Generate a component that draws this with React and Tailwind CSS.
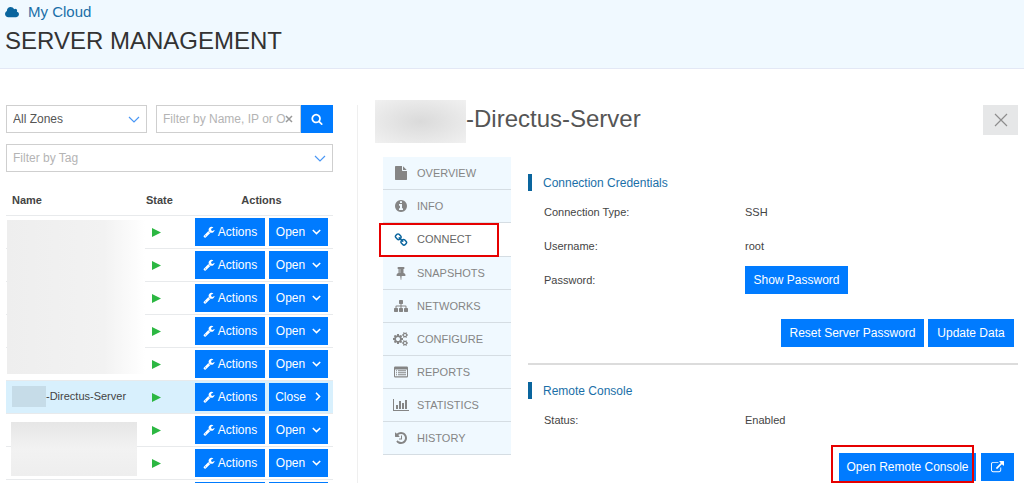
import React from "react";

const PATHS = {
  cloud: [1920, "M1920 1152q0 159-112.5 271.5t-271.5 112.5h-1088q-185 0-316.5-131.5t-131.5-316.5q0-132 71-241.5t187-163.5q-2-28-2-43 0-212 150-362t362-150q158 0 286.5 88t187.5 230q70-62 166-62 106 0 181 75t75 181q0 75-41 138 129 30 213 134.5t84 239.5z"],
  wrench: [1792, "M448 1472q0-26-19-45t-45-19-45 19-19 45 19 45 45 19 45-19 19-45zm644-420l-682 682q-37 37-90 37-52 0-91-37l-106-108q-38-36-38-90 0-53 38-91l681-681q39 98 114.5 173.5t173.5 114.5zm634-435q0 39-23 106-47 134-164.5 217.5t-258.5 83.5q-185 0-316.5-131.5t-131.5-316.5 131.5-316.5 316.5-131.5q58 0 121.5 16.5t107.5 46.5q16 11 16 28t-16 28l-293 169v224l193 107q5-3 79-48.5t135.5-81 70.5-35.5q15 0 23.5 10t8.5 25z"],
  search: [1792, "M1216 832q0-185-131.5-316.5t-316.5-131.5-316.5 131.5-131.5 316.5 131.5 316.5 316.5 131.5 316.5-131.5 131.5-316.5zm512 832q0 52-38 90t-90 38q-54 0-90-38l-343-342q-179 124-399 124-143 0-273.5-55.5t-225-150-150-225-55.5-273.5 55.5-273.5 150-225 225-150 273.5-55.5 273.5 55.5 225 150 150 225 55.5 273.5q0 220-124 399l343 343q37 37 37 90z"],
  file: [1792, "M1152 512v-472q22 14 36 28l408 408q14 14 28 36h-472zm-128 32q0 40 28 68t68 28h544v1056q0 40-28 68t-68 28h-1344q-40 0-68-28t-28-68v-1600q0-40 28-68t68-28h800v544z"],
  info: [1792, "M1152 1376v-160q0-14-9-23t-23-9h-96v-512q0-14-9-23t-23-9h-320q-14 0-23 9t-9 23v160q0 14 9 23t23 9h96v320h-96q-14 0-23 9t-9 23v160q0 14 9 23t23 9h448q14 0 23-9t9-23zm-128-896v-160q0-14-9-23t-23-9h-192q-14 0-23 9t-9 23v160q0 14 9 23t23 9h192q14 0 23-9t9-23zm640 416q0 209-103 385.5t-279.5 279.5-385.5 103-385.5-103-279.5-279.5-103-385.5 103-385.5 279.5-279.5 385.5-103 385.5 103 279.5 279.5 103 385.5z"],
  link: [1792, "M1520 1216q0-40-28-68l-208-208q-28-28-68-28-42 0-72 32 3 3 19 18.5t21.5 21.5 15 19 13 25.5 3.5 27.5q0 40-28 68t-68 28q-15 0-27.5-3.5t-25.5-13-19-15-21.5-21.5-18.5-19q-33 31-33 73 0 40 28 68l206 207q27 27 68 27 40 0 68-26l147-146q28-28 28-67zm-703-705q0-40-28-68l-206-207q-28-28-68-28-39 0-68 27l-147 146q-28 28-28 67 0 40 28 68l208 208q27 27 68 27 42 0 72-31-3-3-19-18.5t-21.5-21.5-15-19-13-25.5-3.5-27.5q0-40 28-68t68-28q15 0 27.5 3.5t25.5 13 19 15 21.5 21.5 18.5 19q33-31 33-73zm895 705q0 120-85 203l-147 146q-83 83-203 83-121 0-204-85l-206-207q-83-83-83-203 0-123 88-209l-88-88q-86 88-208 88-120 0-204-84l-208-208q-84-84-84-204t85-203l147-146q83-83 203-83 121 0 204 85l206 207q83 83 83 203 0 123-88 209l88 88q86-88 208-88 120 0 204 84l208 208q84 84 84 204z"],
  pin: [1792, "M800 864v-448q0-14-9-23t-23-9-23 9-9 23v448q0 14 9 23t23 9 23-9 9-23zm672 352q0 26-19 45t-45 19h-429l-51 483q-2 12-10.5 20.5t-20.5 8.5h-1q-27 0-32-27l-76-485h-404q-26 0-45-19t-19-45q0-123 78.5-221.5t177.5-98.5v-512q-52 0-90-38t-38-90 38-90 90-38h640q52 0 90 38t38 90-38 90-90 38v512q99 0 177.5 98.5t78.5 221.5z"],
  sitemap: [1792, "M1792 1248v320q0 40-28 68t-68 28h-320q-40 0-68-28t-28-68v-320q0-40 28-68t68-28h96v-192h-512v192h96q40 0 68 28t28 68v320q0 40-28 68t-68 28h-320q-40 0-68-28t-28-68v-320q0-40 28-68t68-28h96v-192h-512v192h96q40 0 68 28t28 68v320q0 40-28 68t-68 28h-320q-40 0-68-28t-28-68v-320q0-40 28-68t68-28h96v-192q0-52 38-90t90-38h512v-192h-96q-40 0-68-28t-28-68v-320q0-40 28-68t68-28h320q40 0 68 28t28 68v320q0 40-28 68t-68 28h-96v192h512q52 0 90 38t38 90v192h96q40 0 68 28t28 68z"],
  cogs: [1920, "M896 896q0-106-75-181t-181-75-181 75-75 181 75 181 181 75 181-75 75-181zm768 512q0-52-38-90t-90-38-90 38-38 90q0 53 37.5 90.5t90.5 37.5 90.5-37.5 37.5-90.5zm0-1024q0-52-38-90t-90-38-90 38-38 90q0 53 37.5 90.5t90.5 37.5 90.5-37.5 37.5-90.5zm-384 421v185q0 10-7 19.5t-16 10.5l-155 24q-11 35-32 76 34 48 90 115 7 11 7 20 0 12-7 19-23 30-82.5 89.5t-78.5 59.5q-11 0-21-7l-115-90q-37 19-77 31-11 108-23 155-7 24-30 24h-186q-11 0-20-7.5t-10-17.5l-23-153q-34-10-75-31l-118 89q-7 7-20 7-11 0-21-8-144-133-144-160 0-9 7-19 10-14 41-53t47-61q-23-44-35-82l-152-24q-10-1-17-9.5t-7-19.5v-185q0-10 7-19.5t16-10.5l155-24q11-35 32-76-34-48-90-115-7-11-7-20 0-12 7-20 22-30 82-89t79-59q11 0 21 7l115 90q34-18 77-32 11-108 23-154 7-24 30-24h186q11 0 20 7.5t10 17.5l23 153q34 10 75 31l118-89q8-7 20-7 11 0 21 8 144 133 144 160 0 8-7 19-12 16-42 54t-45 60q23 48 34 82l152 23q10 2 17 10.5t7 19.5zm640 533v140q0 16-149 31-12 27-30 52 51 113 51 138 0 4-4 7-122 71-124 71-8 0-46-47t-52-68q-20 2-30 2t-30-2q-14 21-52 68t-46 47q-2 0-124-71-4-3-4-7 0-25 51-138-18-25-30-52-149-15-149-31v-140q0-16 149-31 13-29 30-52-51-113-51-138 0-4 4-7 4-2 35-20t59-34 30-16q8 0 46 46.5t52 67.5q20-2 30-2t30 2q51-71 92-112l6-2q4 0 124 70 4 3 4 7 0 25-51 138 17 23 30 52 149 15 149 31zm0-1024v140q0 16-149 31-12 27-30 52 51 113 51 138 0 4-4 7-122 71-124 71-8 0-46-47t-52-68q-20 2-30 2t-30-2q-14 21-52 68t-46 47q-2 0-124-71-4-3-4-7 0-25 51-138-18-25-30-52-149-15-149-31v-140q0-16 149-31 13-29 30-52-51-113-51-138 0-4 4-7 4-2 35-20t59-34 30-16q8 0 46 46.5t52 67.5q20-2 30-2t30 2q51-71 92-112l6-2q4 0 124 70 4 3 4 7 0 25-51 138 17 23 30 52 149 15 149 31z"],
  list: [1792, "M160 192h1472a160 160 0 0 1 160 160v1088a160 160 0 0 1-160 160h-1472a160 160 0 0 1-160-160v-1088a160 160 0 0 1 160-160zM128 576v832a32 32 0 0 0 32 32h1472a32 32 0 0 0 32-32v-832zM256 672h128v128h-128zM512 672h1024v128h-1024zM256 928h128v128h-128zM512 928h1024v128h-1024zM256 1184h128v128h-128zM512 1184h1024v128h-1024z"],
  chart: [2048, "M640 896v512h-256v-512h256zm384-512v1024h-256v-1024h256zm1024 1152v128h-2048v-1536h128v1408h1920zm-640-896v768h-256v-768h256zm384-384v1152h-256v-1152h256z"],
  history: [1792, "M1664 896q0 156-61 298t-164 245-245 164-298 61q-172 0-327-72.5t-264-204.5q-7-10-6.5-22.5t8.5-20.5l137-138q10-9 25-9 16 2 23 12 73 95 179 147t225 52q104 0 198.5-40.5t163.5-109.5 109.5-163.5 40.5-198.5-40.5-198.5-109.5-163.5-163.5-109.5-198.5-40.5q-98 0-188 35.5t-160 101.5l137 138q31 30 14 69-17 40-59 40h-448q-26 0-45-19t-19-45v-448q0-42 40-59 39-17 69 14l130 129q107-101 244.5-156.5t284.5-55.5q156 0 298 61t245 164 164 245 61 298zm-640-288v448q0 14-9 23t-23 9h-320q-14 0-23-9t-9-23v-64q0-14 9-23t23-9h224v-352q0-14 9-23t23-9h64q14 0 23 9t9 23z"],
  external: [1792, "M1408 928v320q0 119-84.5 203.5t-203.5 84.5h-832q-119 0-203.5-84.5t-84.5-203.5v-832q0-119 84.5-203.5t203.5-84.5h704q14 0 23 9t9 23v64q0 14-9 23t-23 9h-704q-66 0-113 47t-47 113v832q0 66 47 113t113 47h832q66 0 113-47t47-113v-320q0-14 9-23t23-9h64q14 0 23 9t9 23zm384-864v512q0 26-19 45t-45 19-45-19l-176-176-652 652q-10 10-23 10t-23-10l-114-114q-10-10-10-23t10-23l652-652-176-176q-19-19-19-45t19-45 45-19h512q26 0 45 19t19 45z"],
};

function Icon({ name, className }) {
  const [width, d] = PATHS[name];
  return (
    <svg viewBox={`0 0 ${width} 1792`} className={className} fill="currentColor" fillRule={name === "list" ? "evenodd" : "nonzero"} aria-hidden="true">
      <path d={d} />
    </svg>
  );
}

function Chevron({ className, d = "M1 1l5 5 5-5", box = "0 0 12 7", weight = 1.2 }) {
  return (
    <svg viewBox={box} className={className} fill="none" stroke="currentColor" strokeWidth={weight} aria-hidden="true">
      <path d={d} />
    </svg>
  );
}

function Select({ label, className, children }) {
  return (
    <div className={"relative " + className}>
      <select
        aria-label={label}
        className="h-7 w-full appearance-none border border-[#cfcfcf] bg-white px-[6px] text-xs text-inherit outline-none"
      >
        {children}
      </select>
      <Chevron className="pointer-events-none absolute right-[7px] top-[11px] h-[7px] w-3 text-[#4a97f5]" />
    </div>
  );
}

function Button({ className = "", children, ...rest }) {
  return (
    <button
      type="button"
      className={"flex h-7 shrink-0 items-center justify-center whitespace-nowrap bg-[#007bff] text-xs text-white " + className}
      {...rest}
    >
      {children}
    </button>
  );
}

const SERVERS = [
  { id: 1 },
  { id: 2 },
  { id: 3 },
  { id: 4 },
  { id: 5 },
  { id: 6, name: "-Directus-Server", open: true },
  { id: 7 },
  { id: 8 },
  { id: 9 },
];

function ServerRow({ server }) {
  return (
    <tr className={"h-[33px] border-b border-[#e8eaec] " + (server.open ? "bg-[#d8f0fd]" : "")}>
      <td className="pl-[6px]">
        {server.name && (
          <span className="flex items-center">
            <span className="h-[21px] w-[34px] bg-[#c6dce8]" />
            {server.name}
          </span>
        )}
      </td>
      <td className="pt-[2px]">
        <svg viewBox="0 0 9 9" className="ml-[7px] size-[9px] fill-[#2cb742]" role="img" aria-label="Running">
          <path d="M0 0l9 4.5L0 9z" />
        </svg>
      </td>
      <td>
        <div className="flex gap-1">
          <Button className="w-[70px] gap-[3px]">
            <Icon name="wrench" className="size-3" />
            Actions
          </Button>
          <Button className="w-[59px] gap-[7px]">
            {server.open ? "Close" : "Open"}
            {server.open ? (
              <Chevron box="0 0 9 9" d="M3 0.8l3.6 3.7L3 8.2" weight={1.5} className="size-[9px]" />
            ) : (
              <Chevron box="0 0 9 9" d="M0.8 3l3.7 3.6L8.2 3" weight={1.5} className="size-[9px]" />
            )}
          </Button>
        </div>
      </td>
    </tr>
  );
}

function ServerList() {
  return (
    <aside className="w-[358px] shrink-0 border-r border-[#efefef] pl-[6px] pr-6">
      <div className="flex">
        <Select label="Zone" className="mr-[9px] w-[141px] text-[#555]">
          <option>All Zones</option>
        </Select>
        <div className="relative min-w-0 flex-1">
          <input
            type="text"
            aria-label="Filter by Name, IP or OS"
            placeholder="Filter by Name, IP or OS"
            className="h-7 w-full border border-[#cfcfcf] bg-white pl-[6px] pr-[14px] text-xs outline-none placeholder:text-[#b4b4b4]"
          />
          <button type="button" aria-label="Clear filter" className="absolute right-2 top-[10px] text-[#999]">
            <Chevron box="0 0 8 8" d="M1 1l6 6M7 1L1 7" weight={1.5} className="size-2" />
          </button>
        </div>
        <Button className="w-8" aria-label="Search">
          <Icon name="search" className="size-3" />
        </Button>
      </div>
      <Select label="Filter by Tag" className="mt-[11px] text-[#b4b4b4]">
        <option>Filter by Tag</option>
      </Select>

      <div className="relative mt-3">
        <table className="w-full table-fixed border-collapse text-[11px] text-[#444]">
          <colgroup>
            <col />
            <col className="w-[50px]" />
            <col className="w-[138px]" />
          </colgroup>
          <thead>
            <tr className="h-[31px] border-b border-[#e8eaec] text-left">
              <th className="pl-[6px] pt-[2px]">Name</th>
              <th className="pl-px pt-[2px]">State</th>
              <th className="pr-[5px] pt-[2px] text-center">Actions</th>
            </tr>
          </thead>
          <tbody>
            {SERVERS.map((server) => (
              <ServerRow key={server.id} server={server} />
            ))}
          </tbody>
        </table>
        <div className="absolute left-px top-9 h-[154px] w-[138px] bg-linear-to-r from-[#eeeeee] via-[#f2f2f2] via-70% to-white" />
        <div className="absolute left-[5px] top-[238px] h-[54px] w-[126px] bg-linear-to-b from-[#e6e6e6] via-[#f2f2f2] to-[#eeeeee]" />
      </div>
    </aside>
  );
}

const TABS = [
  ["OVERVIEW", "file"],
  ["INFO", "info"],
  ["CONNECT", "link"],
  ["SNAPSHOTS", "pin"],
  ["NETWORKS", "sitemap"],
  ["CONFIGURE", "cogs"],
  ["REPORTS", "list"],
  ["STATISTICS", "chart"],
  ["HISTORY", "history"],
];

function Tabs() {
  return (
    <nav className="w-32 shrink-0 text-[11px]">
      {TABS.map(([label, icon]) => {
        const active = label === "CONNECT";
        return (
          <a
            key={label}
            href={"#" + label.toLowerCase()}
            className={
              "relative flex items-center border-b border-[#d5dde3] pl-2 " +
              (active ? "z-10 h-[34px] bg-white text-[#666]" : "h-[33px] bg-[#f0f9ff] text-[#858585]")
            }
          >
            <span className={"mr-[7px] flex w-[19px] justify-center " + (active ? "text-[#0a659e]" : "")}>
              <Icon name={icon} className="h-[14px]" />
            </span>
            {label}
            {active && <span className="absolute -left-1 top-0 h-[34px] w-[120px] border-2 border-[#e60000]" />}
          </a>
        );
      })}
    </nav>
  );
}

function SectionTitle({ children }) {
  return (
    <h3 className="flex h-[17px] items-center border-l-4 border-[#0a659e] pl-[11px] text-xs text-[#1a6fa8]">{children}</h3>
  );
}

function Field({ label, children }) {
  return (
    <div className="flex h-[34px] items-center pl-4">
      <dt className="w-[201px] shrink-0">{label}</dt>
      <dd>{children}</dd>
    </div>
  );
}

function Details() {
  return (
    <section className="min-w-0 flex-1 pl-[17px] pr-[6px]">
      <div className="flex items-start">
        <div className="-mt-[5px] flex flex-1 items-start">
          <span className="h-[43px] w-[91px] bg-radial from-[#dadada] to-[#f1f1f1]" />
          <h2 className="text-2xl leading-[38px] text-[#555]">-Directus-Server</h2>
        </div>
        <button type="button" aria-label="Close" className="flex h-[30px] w-[35px] items-center justify-center bg-[#e6e7e8] text-[#8d8d8d]">
          <Chevron box="0 0 14 14" d="M1 1l12 12M13 1L1 13" weight={1.2} className="size-[14px]" />
        </button>
      </div>

      <div className="mt-[14px] flex pl-2">
        <Tabs />
        <div className="ml-[17px] min-w-0 flex-1 pt-[17px] text-[11px] text-[#444]">
          <SectionTitle>Connection Credentials</SectionTitle>
          <dl className="mt-1">
            <Field label="Connection Type:">SSH</Field>
            <Field label="Username:">root</Field>
            <Field label="Password:">
              <Button className="w-[103px]">Show Password</Button>
            </Field>
          </dl>
          <div className="mt-[22px] flex justify-end gap-1 pr-1">
            <Button className="w-[143px]">Reset Server Password</Button>
            <Button className="w-[86px]">Update Data</Button>
          </div>
          <hr className="mt-4 border-t-2 border-[#dcdcdc]" />
          <div className="mt-[17px]">
            <SectionTitle>Remote Console</SectionTitle>
          </div>
          <dl className="mt-1">
            <Field label="Status:">Enabled</Field>
          </dl>
          <div className="mt-4 flex justify-end gap-[5px] pr-1">
            <div className="relative">
              <Button className="w-[137px]">Open Remote Console</Button>
              <span className="absolute -left-2 -top-2 h-[38px] w-[143px] border-2 border-[#e60000]" />
            </div>
            <Button className="w-[33px]" aria-label="Open in new window">
              <Icon name="external" className="size-[13px]" />
            </Button>
          </div>
        </div>
      </div>
    </section>
  );
}

export default function App() {
  return (
    <div className="h-screen overflow-hidden bg-white font-['Liberation_Sans',Arial,sans-serif]">
      <header className="border-b border-[#e3e8f5] bg-[#f0f9ff] px-[5px] pb-[13px] pt-[2px]">
        <a href="#cloud" className="flex items-center gap-[9px] text-[15px] leading-5 text-[#1a6fa8]">
          <Icon name="cloud" className="h-[13px] w-[14px] text-[#0a659e]" />
          My Cloud
        </a>
        <h1 className="mt-1 text-2xl leading-[29px] text-[#333]">SERVER MANAGEMENT</h1>
      </header>
      <main className="flex pt-9">
        <ServerList />
        <Details />
      </main>
    </div>
  );
}
